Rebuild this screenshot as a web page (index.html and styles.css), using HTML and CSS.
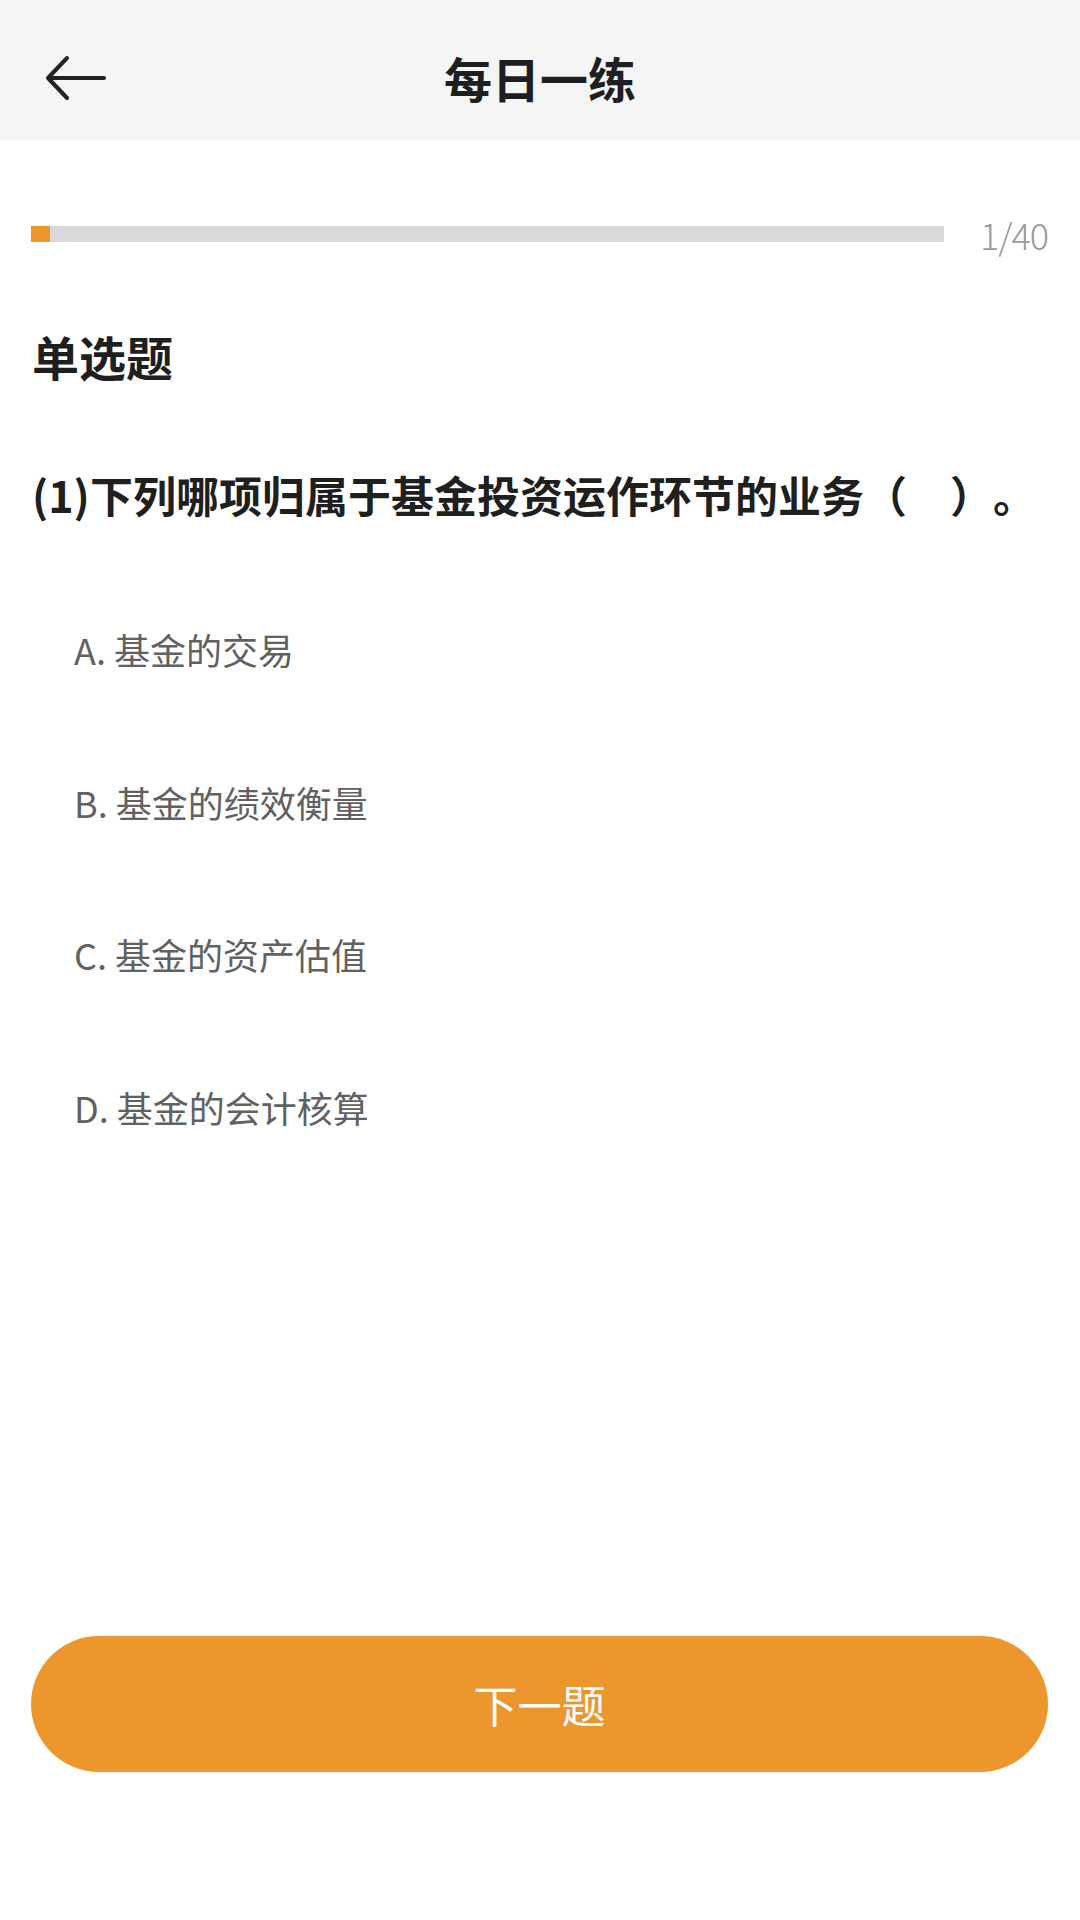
FILE: index.html
```html
<!DOCTYPE html>
<html lang="zh-CN">
<head>
<meta charset="utf-8">
<title>每日一练</title>
<link rel="stylesheet" href="styles.css">
</head>
<body>
<div class="page">
  <header class="topbar">
    <div class="back">
      <svg class="back-icon" width="62" height="46" viewBox="0 0 62 46" fill="none" stroke="#222" stroke-width="4" stroke-linecap="round" stroke-linejoin="round">
        <path d="M59 23 H3 M22 3 L3 23 L22 43"/>
      </svg>
    </div>
    <h1 class="title">每日一练</h1>
    <div class="spacer"></div>
  </header>

  <main class="content">
    <div class="progress">
      <div class="track"><div class="fill" style="width:19px"></div></div>
      <span class="count">1/40</span>
    </div>

    <h2 class="qtype">单选题</h2>
    <p class="question">(1)下列哪项归属于基金投资运作环节的业务（　）。</p>

    <ul class="options">
      <li class="option">A. 基金的交易</li>
      <li class="option">B. 基金的绩效衡量</li>
      <li class="option">C. 基金的资产估值</li>
      <li class="option">D. 基金的会计核算</li>
    </ul>
  </main>

  <footer class="footer">
    <button class="next">下一题</button>
  </footer>
</div>
</body>
</html>
```

FILE: styles.css
```css
* { box-sizing: border-box; }

html, body {
  margin: 0;
  padding: 0;
  background: #ffffff;
}

body {
  font-family: "Noto Sans CJK SC", "Noto Sans", sans-serif;
  color: #222222;
  text-spacing-trim: space-all;
}

.page {
  width: 1080px;
  height: 1920px;
  display: flex;
  flex-direction: column;
}

.topbar {
  height: 140px;
  padding-top: 14px;
  background: #f5f5f5;
  display: grid;
  grid-template-columns: 1fr auto 1fr;
  align-items: center;
}

.back {
  padding-left: 45px;
  padding-top: 2px;
  display: flex;
  align-items: center;
}

.back-icon { display: block; }

.title {
  margin: 0;
  font-size: 48px;
  font-weight: 700;
  line-height: 1;
  color: #1f1f1f;
}

.content {
  flex: 1;
  display: flex;
  flex-direction: column;
}

.progress {
  display: flex;
  align-items: center;
  gap: 36px;
  margin-top: 69px;
  padding: 0 32px 0 31px;
  height: 50px;
}

.track {
  flex: 1;
  height: 16px;
  background: #d9d9d9;
}

.fill {
  height: 100%;
  background: #ee962e;
}

.count {
  font-size: 36px;
  font-weight: 300;
  color: #9a9a9a;
  line-height: 50px;
  letter-spacing: -1px;
}

.qtype {
  margin: 68px 0 0;
  padding-left: 32px;
  font-size: 47px;
  font-weight: 700;
  line-height: 58px;
  color: #1f1f1f;
}

.question {
  margin: 80px 0 0;
  padding-left: 32px;
  font-size: 43px;
  font-weight: 700;
  line-height: 58px;
  color: #1f1f1f;
  text-spacing-trim: space-all;
}

.options {
  list-style: none;
  margin: 50px 0 0;
  padding: 0 0 0 74px;
}

.option {
  height: 152.5px;
  display: flex;
  align-items: center;
  font-size: 36px;
  color: #616161;
}

.footer {
  padding: 0 32px 148px 31px;
}

.next {
  display: block;
  width: 100%;
  height: 136px;
  border: none;
  border-radius: 68px;
  background: #ee962e;
  color: #ffffff;
  font-family: "Noto Sans CJK SC", "Noto Sans", sans-serif;
  font-size: 44px;
  font-weight: 400;
  padding: 0;
}
```
